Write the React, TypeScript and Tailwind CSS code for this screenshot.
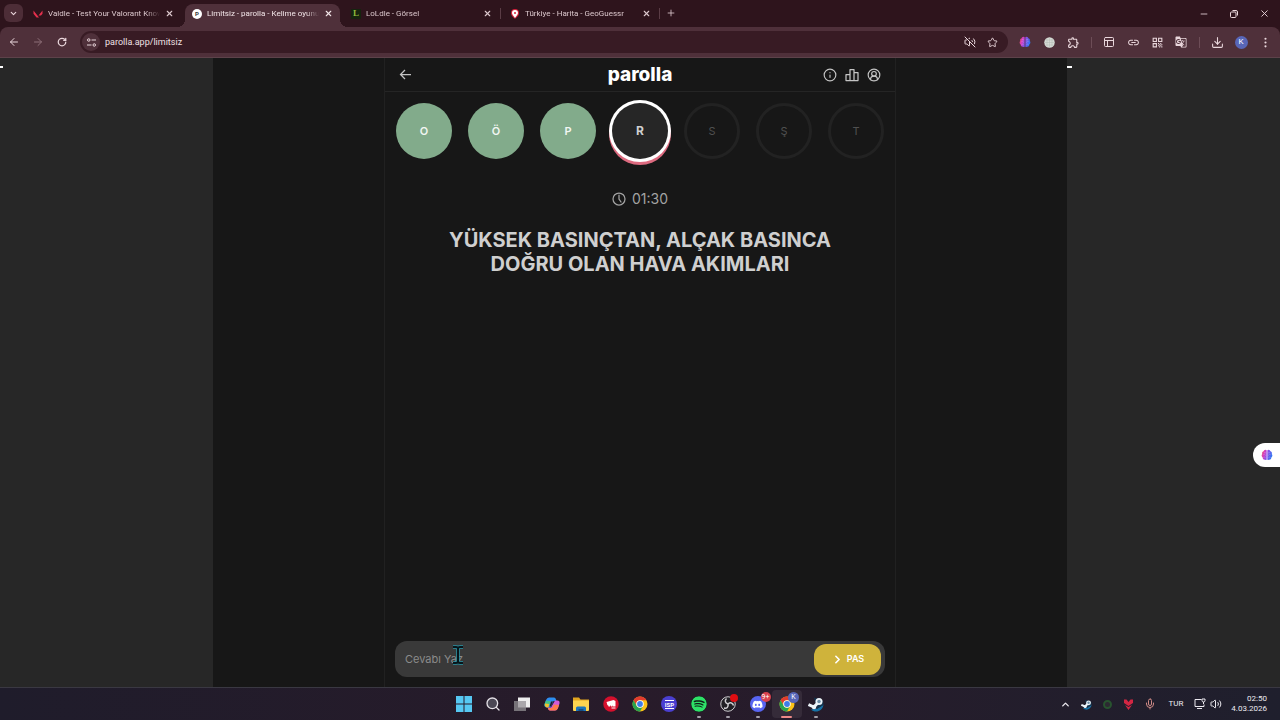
import React, { useState } from 'react';
import {
    ArrowLeft, ArrowRight, ChevronDown, ChevronRight, ChevronUp, CircleUserRound, Download,
    EllipsisVertical, Info, Mic, Minus, PanelsTopLeft, Plus,
    RotateCw, Search, Star, Volume2, VolumeOff, X,
} from 'lucide-react';
import { FaSpotify, FaDiscord } from 'react-icons/fa';
import { MdGTranslate, MdLink, MdOutlineExtension, MdQrCode } from 'react-icons/md';

const tabs = [
    { title: 'Valdle - Test Your Valorant Know', icon: 'valdle' },
    { title: 'Limitsiz - parolla - Kelime oyunu', icon: 'parolla', active: true },
    { title: 'LoLdle - Görsel', icon: 'loldle' },
    { title: 'Türkiye - Harita - GeoGuessr', icon: 'geo' },
];

const letters = [
    { char: 'O', state: 'correct' },
    { char: 'Ö', state: 'correct' },
    { char: 'P', state: 'correct' },
    { char: 'R', state: 'current' },
    { char: 'S', state: 'waiting' },
    { char: 'Ş', state: 'waiting' },
    { char: 'T', state: 'waiting' },
];

const letterStyles: Record<string, string> = {
    correct: 'bg-[#82ab8b] text-[11px] text-[#f1f6f2] font-semibold',
    current: 'bg-[#262626] text-[12px] text-[#cfcfcf] font-bold shadow-[0_0_0_3px_#ffffff,0_3px_0_3px_#dc6a7f]',
    waiting: 'border-[3px] border-[#222222] text-[11px] text-[#505050]',
};

const Favicon = ({ name }: { name: string }) => {
    if (name === 'valdle') {
        return (
            <svg className="size-[10px] shrink-0" viewBox="0 0 20 20" aria-hidden="true">
                <path fill="#e5304d" d="M1 3l11 14H7L1 9.500zM19 3v6.500L16 13h-5z" />
            </svg>
        );
    }
    if (name === 'parolla') {
        return (
            <span className="flex size-[10px] shrink-0 items-center justify-center rounded-full bg-white text-[6px] font-bold text-[#333]">P</span>
        );
    }
    if (name === 'loldle') {
        return (
            <span className="flex size-[10px] shrink-0 items-center justify-center bg-[#16240f] font-['Liberation_Serif'] text-[9px] font-bold text-[#8fb63c]">L</span>
        );
    }
    return (
        <svg className="size-[10px] shrink-0" viewBox="0 0 20 20" aria-hidden="true">
            <path fill="#d6203c" d="M10 0a8 8 0 0 1 8 8c0 6-5 8-8 12C7 16 2 14 2 8a8 8 0 0 1 8-8z" />
            <path fill="#fff" d="M10 2a6 6 0 0 1 6 6c0 4-4 6-6 10-2-4-6-6-6-10a6 6 0 0 1 6-6z" />
            <circle cx="10" cy="8" r="2" fill="#d6203c" />
        </svg>
    );
};

const Brain = ({ className }: { className: string }) => (
    <svg className={className} viewBox="0 0 24 24" aria-hidden="true">
        <defs>
            <linearGradient id="brain" x1="0" y1="0" x2="24" y2="8" gradientUnits="userSpaceOnUse">
                <stop offset="0" stopColor="#f2553f" />
                <stop offset="0.350" stopColor="#d63fc0" />
                <stop offset="0.600" stopColor="#8b4fe8" />
                <stop offset="1" stopColor="#2f78f2" />
            </linearGradient>
        </defs>
        <path fill="url(#brain)" d="M11.300 2.500C9 0 5.500 2 5.300 4.500 2.500 5 1.500 8 2.600 10 .4 12 1 15.500 3.300 17c0 3.500 3 5 5 4.300 1 1.200 2.400.9 3-.3zM12.700 2.500C15 0 18.500 2 18.700 4.500c2.800.5 3.800 3.500 2.700 5.500 2.200 2 1.600 5.500-.7 7 0 3.500-3 5-5 4.300-1 1.200-2.400.9-3-.3z" />
        <path fill="none" stroke="#fff" strokeOpacity="0.400" d="M5 11c2-1 4 0 4 2M6 6c1 2 3 2 4 1M5 17c1-1 3-1 4 0M19 11c-2-1-4 0-4 2M18 6c-1 2-3 2-4 1M19 17c-1-1-3-1-4 0" />
    </svg>
);

const TabStrip = () => (
    <div className="flex h-[27px] items-end bg-[#2e141c]">
        <button aria-label="Sekmelerde ara" className="mb-[5px] ml-1 mr-[5px] flex h-[18px] w-[19px] items-center justify-center rounded-md bg-[#4d2d37]">
            <ChevronDown className="size-[9px]" strokeWidth={3} />
        </button>
        {tabs.map((tab) => (
            <div
                key={tab.title}
                className={
                    tab.active
                        ? "relative flex h-[23px] w-[159px] items-center pl-[5px] text-[#f3e6e9]"
                        : "relative flex h-[23px] w-[159px] items-center pl-[5px] text-[#dcc8cd]"
                }
            >
                {tab.active && (
                    <div className="absolute inset-y-0 -left-[2px] right-[6px] rounded-t-lg bg-[#4f303a]">
                        <div className="absolute -left-2 bottom-0 size-2 bg-[radial-gradient(circle_at_0_0,transparent_8px,#4f303a_8px)]" />
                        <div className="absolute -right-2 bottom-0 size-2 bg-[radial-gradient(circle_at_100%_0,transparent_8px,#4f303a_8px)]" />
                    </div>
                )}
                <div className="relative -mt-1 flex items-center gap-[5px]">
                    <Favicon name={tab.icon} />
                    <span className="w-[112px] overflow-hidden whitespace-nowrap text-[8px] leading-3 [mask-image:linear-gradient(to_right,black_88%,transparent)]">{tab.title}</span>
                    <button aria-label="Sekmeyi kapat">
                        <X className="size-[9px]" strokeWidth={3} />
                    </button>
                    {(tab.icon === 'loldle' || tab.icon === 'geo') && <i className="ml-[3px] h-[11px] w-px bg-[#5a3c45]" />}
                </div>
            </div>
        ))}
        <button aria-label="Yeni sekme" className="mb-[9px] ml-[2px]">
            <Plus className="size-[10px] text-[#dcc8cd]" />
        </button>
        <div className="ml-auto flex self-stretch pr-px">
            <button aria-label="Küçült" className="flex w-[30px] items-center justify-center"><Minus className="size-[10px]" /></button>
            <button aria-label="Geri yükle" className="flex w-[30px] items-center justify-center">
                <svg className="size-[8px]" viewBox="0 0 16 16" fill="none" stroke="currentColor" strokeWidth="2" aria-hidden="true">
                    <rect x="1" y="4" width="11" height="11" rx="2" />
                    <path d="M5 1h7q3 0 3 3v7" />
                </svg>
            </button>
            <button aria-label="Kapat" className="flex w-[30px] items-center justify-center"><X className="size-[11px]" /></button>
        </div>
    </div>
);

const ToolButton = ({ label, children }: { label: string; children: React.ReactNode }) => (
    <button aria-label={label} className="flex h-6 w-6 shrink-0 items-center justify-center">{children}</button>
);

const Divider = () => (
    <div className="flex w-3 shrink-0 justify-center"><i className="h-[11px] w-px bg-[#6d4d57]" /></div>
);

const Toolbar = () => (
    <div className="bg-[#2e141c]">
        <div className="flex h-[31px] items-center rounded-t-lg border-b border-[#5d424a] bg-[#4f303a] pl-[2px] pr-[3px]">
            <ToolButton label="Geri"><ArrowLeft className="size-[12px]" /></ToolButton>
            <ToolButton label="İleri"><ArrowRight className="size-[12px] text-[#8e6f78]" /></ToolButton>
            <ToolButton label="Yenile"><RotateCw className="size-[10px]" strokeWidth={3} /></ToolButton>
            <div className="ml-[6px] flex h-[22px] grow items-center rounded-full bg-[#381b24] pl-[2px] pr-[5px]">
                <button aria-label="Site bilgileri" className="flex size-[18px] items-center justify-center rounded-full bg-[#4f303a]">
                    <svg className="size-[11px]" viewBox="0 0 22 22" fill="none" stroke="currentColor" strokeWidth="2" aria-hidden="true">
                        <circle cx="5.500" cy="6" r="2.500" />
                        <path d="M11 6h9M2 16h9" />
                        <circle cx="16.500" cy="16" r="2.500" />
                    </svg>
                </button>
                <input aria-label="Adres" defaultValue="parolla.app/limitsiz" className="ml-[5px] min-w-0 grow bg-transparent text-[9px] leading-4 text-[#f0e1e5] outline-none" />
                <button aria-label="Sesi aç" className="flex w-[22px] justify-center"><VolumeOff className="size-[12px]" /></button>
                <button aria-label="Yer işareti" className="flex w-[22px] justify-center"><Star className="size-[11px]" /></button>
            </div>
            <div className="w-[5px]" />
            <ToolButton label="Asistan"><Brain className="size-[12px]" /></ToolButton>
            <ToolButton label="Dil">
                <svg className="size-[11px]" viewBox="0 0 22 22" aria-hidden="true">
                    <circle cx="11" cy="11" r="10.500" fill="#d6dcd6" />
                    <path d="M11 1v20M1 11h20M3 6h16M3 16h16M6 3v16M16 3v16" stroke="#b3bab3" />
                </svg>
            </ToolButton>
            <ToolButton label="Uzantılar"><MdOutlineExtension className="size-[13px]" /></ToolButton>
            <Divider />
            <ToolButton label="Okuma modu"><PanelsTopLeft className="size-[12px]" /></ToolButton>
            <ToolButton label="Bağlantı"><MdLink className="size-[13px]" /></ToolButton>
            <ToolButton label="QR kodu"><MdQrCode className="size-[13px]" /></ToolButton>
            <ToolButton label="Çevir"><MdGTranslate className="size-[12px]" /></ToolButton>
            <Divider />
            <ToolButton label="İndirilenler"><Download className="size-[13px]" /></ToolButton>
            <ToolButton label="Profil">
                <span className="flex size-[13px] items-center justify-center rounded-full bg-[#5866b8] text-[8px] text-white">K</span>
            </ToolButton>
            <ToolButton label="Menü"><EllipsisVertical className="size-[13px]" /></ToolButton>
        </div>
    </div>
);

const Game = () => {
    const [answer, setAnswer] = useState('');

    return (
        <main className="flex w-full max-w-lg flex-col border-x border-[#212121] font-['Inter',sans-serif]">
            <header className="grid h-[34px] grid-cols-[1fr_auto_1fr] items-center border-b border-[#252525] px-[14px] text-[#c4c4c4]">
                <button aria-label="Geri dön">
                    <svg className="size-[13px]" viewBox="0 0 26 26" fill="none" stroke="currentColor" strokeWidth="2.500" aria-hidden="true">
                        <path d="M24 13H3M12 4l-9 9 9 9" />
                    </svg>
                </button>
                <h1 className="text-[19px] font-extrabold leading-6 text-white">parolla</h1>
                <div className="flex justify-end gap-[8px]">
                    <button aria-label="Bilgi"><Info className="size-[14px]" /></button>
                    <button aria-label="İstatistikler">
                        <svg className="size-[14px]" viewBox="0 0 28 28" fill="none" stroke="currentColor" strokeWidth="2.500" strokeLinejoin="round" aria-hidden="true">
                            <path d="M2 13h8v12H2zM10 3h8v22h-8zM18 9h8v16h-8z" />
                        </svg>
                    </button>
                    <button aria-label="Profil"><CircleUserRound className="size-[14px]" /></button>
                </div>
            </header>
            <ul className="flex justify-between px-[11px] pt-[11px]">
                {letters.map((letter) => (
                    <li key={letter.char} className={`flex size-14 items-center justify-center rounded-full ${letterStyles[letter.state]}`}>
                        {letter.char}
                    </li>
                ))}
            </ul>
            <div className="mt-[30px] flex items-center justify-center gap-[6px] text-[#a3a3a3]">
                <svg className="size-[14px]" viewBox="0 0 28 28" fill="none" stroke="currentColor" strokeWidth="2.500" strokeLinecap="round" aria-hidden="true">
                    <circle cx="14" cy="14" r="12" />
                    <path d="M14 6v8l4 6" />
                </svg>
                <span className="text-[14px] leading-5">01:30</span>
            </div>
            <h2 className="mt-[19px] px-10 text-center text-[20px] font-bold leading-6 text-[#cfcfcf]">
                YÜKSEK BASINÇTAN, ALÇAK BASINCA DOĞRU OLAN HAVA AKIMLARI
            </h2>
            <form
                onSubmit={(e) => e.preventDefault()}
                className="relative mx-[10px] mb-[10px] mt-auto flex h-9 items-center rounded-xl bg-[#393939] pl-[10px] pr-[4px]"
            >
                <input
                    aria-label="Cevap"
                    className="min-w-0 grow bg-transparent text-[11px] leading-5 text-white outline-none placeholder:text-[#8b8b8b]"
                    placeholder="Cevabı Yaz"
                    value={answer}
                    onChange={(e) => setAnswer(e.target.value)}
                />
                <button type="submit" className="flex h-[31px] w-[67px] items-center justify-center gap-[3px] rounded-xl bg-[#cfb33b] text-[9px] font-semibold text-white">
                    <ChevronRight className="size-[13px]" strokeWidth={3} />
                    PAS
                </button>
                {/* text cursor */}
                <svg className="pointer-events-none absolute left-[57px] top-[4px] h-5 w-3" viewBox="0 0 24 40" fill="none" aria-hidden="true">
                    <path d="M2 4h6q4 0 4 4 0-4 4-4h6M12 8v24M2 36h6q4 0 4-4 0 4 4 4h6" stroke="#2795a8" strokeWidth="7" />
                    <path d="M2 4h6q4 0 4 4 0-4 4-4h6M12 8v24M2 36h6q4 0 4-4 0 4 4 4h6" stroke="#07161b" strokeWidth="4" />
                </svg>
            </form>
        </main>
    );
};

const Chrome = () => (
    <svg className="size-4" viewBox="0 0 32 32" aria-hidden="true">
        <circle cx="16" cy="16" r="15" fill="#fbc116" />
        <path d="M3 8.500a15 15 0 0 1 26 0H16a7.500 7.500 0 0 0-6.500 11.200z" fill="#e23b2e" />
        <path d="M3 8.500l6.500 11.200A7.500 7.500 0 0 0 22.500 19.700L16 31A15 15 0 0 1 3 8.500z" fill="#2aa44f" />
        <circle cx="16" cy="16" r="7.500" fill="#fff" />
        <circle cx="16" cy="16" r="5.800" fill="#3f7de8" />
    </svg>
);

const SteamIcon = ({ className }: { className: string }) => (
    <svg className={className} viewBox="0 0 32 32" aria-hidden="true">
        <path fill="#1672a6" d="M16 31c7 0 14-5 15-14L18 25l-12 2c3 3 6 4 10 4z" />
        <path fill="#14344f" d="M12 3l18 6 1 9-13 8z" />
        <path d="M22 11l-10 11L1 17" fill="none" stroke="#edf5fa" strokeWidth="6" />
        <circle cx="22" cy="11" r="7" fill="#edf5fa" />
        <circle cx="22" cy="11" r="3.500" fill="#6c8fa8" />
        <circle cx="12" cy="22" r="4.500" fill="#edf5fa" />
    </svg>
);

const apps = [
    {
        name: 'Başlat',
        icon: (
            <svg className="size-4" viewBox="0 0 32 32" aria-hidden="true">
                <path fill="#56c8f2" d="M0 0h15v15H0zM17 0h15v15H17zM0 17h15v15H0zM17 17h15v15H17z" />
            </svg>
        ),
    },
    { name: 'Ara', icon: <Search className="size-4 fill-[#4b4754] text-[#e4e0e6]" /> },
    {
        name: 'Görev görünümü',
        icon: (
            <svg className="size-4" viewBox="0 0 32 32" aria-hidden="true">
                <path fill="#eeeeee" d="M8 3h24v20H8z" />
                <path fill="#777379" d="M0 10h24v20H0z" />
                <path fill="#aaa7ab" d="M8 10h16v13H8z" />
            </svg>
        ),
    },
    {
        name: 'Copilot',
        icon: (
            <svg className="size-4" viewBox="0 0 32 32" aria-hidden="true">
                <path fill="#2d8ef0" d="M10 3h10q3 0 4 4l1 3h-6l-6 13H6q-6 0-5-6l3-9q2-5 6-5z" />
                <path fill="#42c486" d="M4 9l9 1-3 12H5q-5-1-4-6z" />
                <path fill="#f5c02e" d="M2 15l8 1-1 7H5q-4-2-3-8z" />
                <path fill="#d25ad8" d="M22 9h5q5 0 4 6l-3 9q-2 5-6 5H12q-3 0-4-4l-1-2h7z" />
                <path fill="#ff7b4d" d="M20 17l10 1-2 6q-2 5-6 5H12q-3 0-4-5h8z" />
                <path fill="#281b2a" d="M14 11h4l-4 10h-3z" />
            </svg>
        ),
    },
    {
        name: 'Dosya Gezgini',
        icon: (
            <svg className="size-4" viewBox="0 0 32 32" aria-hidden="true">
                <path fill="#e2a51f" d="M0 3h12l3 4h17v9H0z" />
                <path fill="#fcd450" d="M0 9h32v19q0 2-2 2H2q-2 0-2-2z" />
                <path fill="#1b74bb" d="M6 30v-6q0-3 3-3h14q3 0 3 3v6z" />
                <path fill="#124f86" d="M11 26h10v4H11z" />
            </svg>
        ),
    },
    {
        name: 'Riot',
        icon: (
            <svg className="size-4" viewBox="0 0 32 32" aria-hidden="true">
                <circle cx="16" cy="16" r="15.500" fill="#d5102d" />
                <path fill="#fff" d="M7 12l14-4 4 2v11h-5l-1-3v3h-3l-1-3-1 3h-3l-1-3-1 1z" />
                <path d="M17 24h8" stroke="#fff" strokeWidth="2" />
            </svg>
        ),
    },
    { name: 'Google Chrome', icon: <Chrome /> },
    {
        name: 'ISP',
        icon: (
            <span className="flex size-4 items-center justify-center rounded-full bg-[#4a3fd0]">
                <span className="border-y border-white text-[6px] font-bold leading-[7px] text-white">ISP</span>
            </span>
        ),
    },
    { name: 'Spotify', running: true, icon: <FaSpotify className="size-4 rounded-full bg-[#102018] text-[#2ee068]" /> },
    {
        name: 'OBS',
        running: true,
        icon: (
            <svg className="size-4 overflow-visible" viewBox="0 0 32 32" aria-hidden="true">
                <circle cx="16" cy="16" r="14.500" fill="#211f25" stroke="#cfcdd1" strokeWidth="2" />
                <g fill="none" stroke="#cfcdd1" strokeWidth="3">
                    <path d="M16 16c-6-2-7-7-3-11" />
                    <path d="M16 16c-6-2-7-7-3-11" transform="rotate(120 16 16)" />
                    <path d="M16 16c-6-2-7-7-3-11" transform="rotate(240 16 16)" />
                </g>
                <circle cx="28" cy="4" r="8" fill="#e00d12" />
            </svg>
        ),
    },
    {
        name: 'Discord',
        running: true,
        icon: (
            <span className="relative flex size-4 items-center justify-center rounded-full bg-[#5865f2]">
                <FaDiscord className="size-[11px] text-white" />
                <span className="absolute -right-[5px] -top-[4px] flex size-[10px] items-center justify-center rounded-full bg-[#d8424e] text-[7px] text-white">9+</span>
            </span>
        ),
    },
    {
        name: 'Chrome K',
        running: true,
        active: true,
        icon: (
            <span className="relative">
                <Chrome />
                <span className="absolute -right-[4px] -top-[4px] flex size-[11px] items-center justify-center rounded-full bg-[#5866b8] text-[7px] text-white">K</span>
            </span>
        ),
    },
    { name: 'Steam', running: true, icon: <SteamIcon className="size-4" /> },
];

const Taskbar = () => (
    <footer className="grid h-[33px] grid-cols-[1fr_auto_1fr] items-center border-t border-[#3a3842] bg-linear-to-r from-[#1f1c2b] via-[#281b2a] to-[#1f1f2d] text-[8px] text-[#eceaf0]">
        <div />
        <nav className="grid h-full w-[382px] grid-cols-13">
            {apps.map((app) => (
                <button
                    key={app.name}
                    aria-label={app.name}
                    className={
                        app.active
                            ? "relative my-[2px] flex items-center justify-center rounded-sm bg-[#352b39]"
                            : "relative my-[2px] flex items-center justify-center"
                    }
                >
                    {app.icon}
                    {app.running && (
                        <i className={app.active ? "absolute bottom-0 h-[2px] w-[11px] rounded-full bg-[#ee8a88]" : "absolute bottom-0 h-[2px] w-[4px] rounded-full bg-[#a5a1aa]"} />
                    )}
                </button>
            ))}
        </nav>
        <div className="flex items-center justify-end pr-[13px]">
            <button aria-label="Gizli simgeler" className="flex w-[21px] justify-center"><ChevronUp className="size-[11px]" strokeWidth={3} /></button>
            <span className="flex w-[21px] justify-center"><SteamIcon className="size-[11px]" /></span>
            <span className="flex w-[21px] justify-center">
                <i className="size-[9px] rounded-full border-2 border-[#28532f] bg-[#2d2932]" />
            </span>
            <span className="flex w-[21px] justify-center">
                <svg className="size-[11px]" viewBox="0 0 22 22" aria-hidden="true">
                    <path fill="#d32643" d="M2 1h5l4 5 4-5h5v7l-9 6-9-6zM4 12l7 4 7-4-7 10z" />
                </svg>
            </span>
            <span className="flex w-[21px] justify-center"><Mic className="size-[12px] text-[#cf8b87]" /></span>
            <span className="w-[32px] text-center">TUR</span>
            <span className="flex w-4 justify-center">
                <svg className="size-[12px]" viewBox="0 0 24 24" fill="none" stroke="currentColor" strokeWidth="2" aria-hidden="true">
                    <path d="M15 3H2v14h18v-4M6 21h10M19 12V8M16 2v3q0 3 3 3t3-3V2z" />
                </svg>
            </span>
            <span className="flex w-4 justify-center"><Volume2 className="size-[12px]" /></span>
            <time className="w-[43px] whitespace-nowrap text-right leading-[10px]">02:50<br />4.03.2026</time>
        </div>
    </footer>
);

export default function App() {
    return (
        <div className="flex min-h-screen flex-col bg-[#272727] font-['Roboto','Noto_Sans',sans-serif] text-[#ead7dc]">
            <TabStrip />
            <Toolbar />
            <div className="relative flex grow">
                <div className="flex-1 pt-[8px]"><i className="block h-[2px] w-[3px] bg-white" /></div>
                <div className="flex w-2/3 justify-center bg-[#171717]">
                    <Game />
                </div>
                <div className="flex-1 pt-[8px]"><i className="block h-[2px] w-[5px] bg-white" /></div>
                <button aria-label="Asistanı aç" className="absolute right-0 top-[385px] flex h-6 w-[27px] items-center justify-center rounded-l-full bg-white">
                    <Brain className="size-[12px]" />
                </button>
            </div>
            <Taskbar />
        </div>
    );
}
